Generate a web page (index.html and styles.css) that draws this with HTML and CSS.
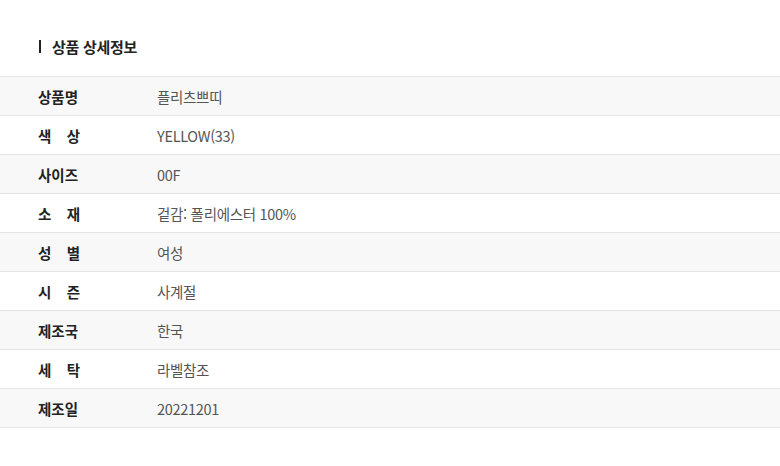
FILE: index.html
```html
<!DOCTYPE html>
<html lang="ko">
<head>
<meta charset="utf-8">
<link rel="stylesheet" href="styles.css">
</head>
<body>
<div class="page">
  <div class="head"><span class="bar"></span><h2 class="title">상품 상세정보</h2></div>
  <table class="info">
    <colgroup><col class="c-label"><col class="c-value"></colgroup>
    <tbody>
      <tr class="alt"><th><span class="lb">상품명</span></th><td>플리츠쁘띠</td></tr>
      <tr><th><span class="lb spread"><span>색</span><span>상</span></span></th><td>YELLOW(33)</td></tr>
      <tr class="alt"><th><span class="lb">사이즈</span></th><td>00F</td></tr>
      <tr><th><span class="lb spread"><span>소</span><span>재</span></span></th><td>겉감: 폴리에스터 100%</td></tr>
      <tr class="alt"><th><span class="lb spread"><span>성</span><span>별</span></span></th><td>여성</td></tr>
      <tr><th><span class="lb spread"><span>시</span><span>즌</span></span></th><td>사계절</td></tr>
      <tr class="alt"><th><span class="lb">제조국</span></th><td>한국</td></tr>
      <tr><th><span class="lb spread"><span>세</span><span>탁</span></span></th><td>라벨참조</td></tr>
      <tr class="alt"><th><span class="lb">제조일</span></th><td>20221201</td></tr>
    </tbody>
  </table>
</div>
</body>
</html>
```
FILE: styles.css
```css
html, body { margin: 0; padding: 0; background: #fff; }
body { font-family: "Noto Sans CJK KR", "Noto Sans", sans-serif; color: #222; }
.page { width: 780px; }
.head { height: 76px; box-sizing: border-box; padding: 38px 0 0 39px; display: flex; align-items: flex-start; }
.bar { width: 2px; height: 13px; background: #222; margin-top: 2px; margin-right: 11px; }
.title { margin: 0; font-size: 15px; font-weight: 700; line-height: 17px; letter-spacing: -0.3px; }
.info { width: 780px; border-collapse: collapse; table-layout: fixed; border-top: 1px solid #e4e4e4; }
.c-label { width: 157px; }
.info tr { height: 39px; border-bottom: 1px solid #e4e4e4; }
.info tr.alt { background: #f8f8f8; }
.info th { padding: 0 0 0 38px; text-align: left; vertical-align: middle; font-size: 14.5px; font-weight: 700; color: #222; }
.lb { display: inline-flex; width: 42px; white-space: nowrap; }
.lb.spread { justify-content: space-between; }
.info td { padding: 0; vertical-align: middle; font-size: 14.5px; color: #555; letter-spacing: -0.3px; }
```
